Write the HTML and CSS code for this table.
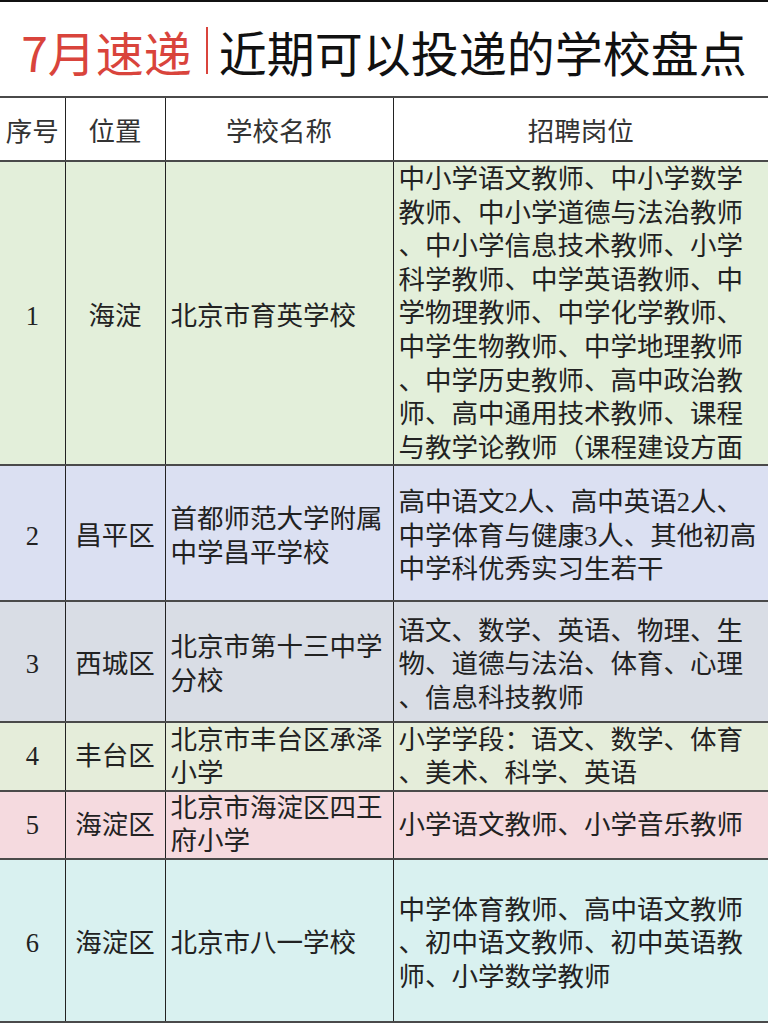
FILE: index.html
```html
<!DOCTYPE html>
<html lang="zh-CN">
<head>
<meta charset="utf-8">
<title>7月速递 近期可以投递的学校盘点</title>
<link rel="stylesheet" href="styles.css">
</head>
<body>
<div class="page">
  <header class="title">
    <span class="title-red">7月速递</span><span class="title-bar"></span><span class="title-black">近期可以投递的学校盘点</span>
  </header>
  <table class="sheet">
    <colgroup>
      <col class="c-no"><col class="c-loc"><col class="c-name"><col class="c-job">
    </colgroup>
    <thead>
      <tr class="r-head">
        <th>序号</th><th>位置</th><th>学校名称</th><th>招聘岗位</th>
      </tr>
    </thead>
    <tbody>
      <tr class="r1">
        <td class="num">1</td>
        <td class="loc">海淀</td>
        <td class="name">北京市育英学校</td>
        <td class="job job-long"><div class="job-clip">中小学语文教师、中小学数学<br>教师、中小学道德与法治教师<br>、中小学信息技术教师、小学<br>科学教师、中学英语教师、中<br>学物理教师、中学化学教师、<br>中学生物教师、中学地理教师<br>、中学历史教师、高中政治教<br>师、高中通用技术教师、课程<br>与教学论教师（课程建设方面</div></td>
      </tr>
      <tr class="r2">
        <td class="num">2</td>
        <td class="loc">昌平区</td>
        <td class="name">首都师范大学附属<br>中学昌平学校</td>
        <td class="job">高中语文2人、高中英语2人、<br>中学体育与健康3人、其他初高<br>中学科优秀实习生若干</td>
      </tr>
      <tr class="r3">
        <td class="num">3</td>
        <td class="loc">西城区</td>
        <td class="name">北京市第十三中学<br>分校</td>
        <td class="job">语文、数学、英语、物理、生<br>物、道德与法治、体育、心理<br>、信息科技教师</td>
      </tr>
      <tr class="r4">
        <td class="num">4</td>
        <td class="loc">丰台区</td>
        <td class="name">北京市丰台区承泽<br>小学</td>
        <td class="job">小学学段：语文、数学、体育<br>、美术、科学、英语</td>
      </tr>
      <tr class="r5">
        <td class="num">5</td>
        <td class="loc">海淀区</td>
        <td class="name">北京市海淀区四王<br>府小学</td>
        <td class="job">小学语文教师、小学音乐教师</td>
      </tr>
      <tr class="r6">
        <td class="num">6</td>
        <td class="loc">海淀区</td>
        <td class="name">北京市八一学校</td>
        <td class="job">中学体育教师、高中语文教师<br>、初中语文教师、初中英语教<br>师、小学数学教师</td>
      </tr>
    </tbody>
  </table>
</div>
</body>
</html>
```

FILE: styles.css
```css
html, body {
  margin: 0;
  padding: 0;
  background: #ffffff;
}

.page {
  width: 768px;
  height: 1024px;
  overflow: hidden;
  border-top: 2px solid #111;
  box-sizing: border-box;
  font-family: "Liberation Serif", "Noto Sans CJK SC", sans-serif;
  color: #222;
}

.title {
  height: 94px;
  box-sizing: border-box;
  padding-top: 3px;
  display: flex;
  align-items: center;
  justify-content: center;
  font-family: "Noto Sans CJK SC", sans-serif;
  font-size: 48px;
  line-height: 1;
  white-space: nowrap;
}

.title-red {
  color: #d9443c;
}

.title-bar {
  display: inline-block;
  width: 0;
  height: 47px;
  border-left: 2px solid #d9443c;
  margin: 0 11px 0 14px;
}

.title-black {
  color: #111;
}

.sheet {
  width: 768px;
  table-layout: fixed;
  border-collapse: collapse;
  font-size: 26.5px;
  line-height: 33.6px;
}

.c-no { width: 65px; }
.c-loc { width: 100px; }
.c-name { width: 228px; }
.c-job { width: 375px; }

.sheet th,
.sheet td {
  padding: 7px 5px 0;
  vertical-align: middle;
  border-top: 2px solid #4a4a4a;
  border-bottom: 2px solid #4a4a4a;
  border-left: 1px solid #222;
  border-right: 1px solid #222;
  white-space: nowrap;
  overflow: hidden;
}

.sheet th:first-child,
.sheet td:first-child {
  border-left: none;
}

.sheet th:last-child,
.sheet td:last-child {
  border-right: none;
}

.sheet th {
  font-weight: 400;
  color: #333;
  text-align: center;
  background: #fff;
}

.num,
.loc {
  text-align: center;
}

.name,
.job {
  text-align: left;
}

.job {
  padding-left: 6px;
}

.sheet td.job-long {
  padding-top: 0;
  vertical-align: top;
}

.job-clip {
  height: 302px;
  box-sizing: border-box;
  padding-top: 1px;
  overflow: hidden;
}

.sheet .r4 td,
.sheet .r5 td {
  padding-top: 0;
  line-height: 33px;
}

.r-head { height: 64px; }
.r1 { height: 304px; background: #e3efda; }
.r2 { height: 136px; background: #dbe0f2; }
.r3 { height: 121px; background: #d9dde5; }
.r4 { height: 69px; background: #e5edda; }
.r5 { height: 68px; background: #f5dadf; }
.r6 { height: 163px; background: #d9f1f0; }
```
